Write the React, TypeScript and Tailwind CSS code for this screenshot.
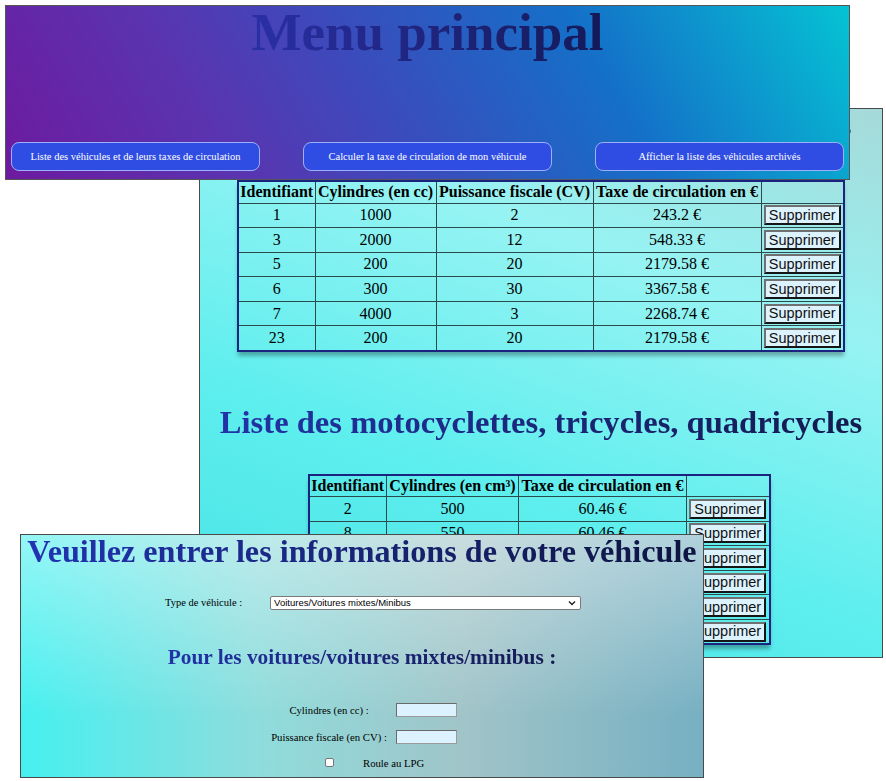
const voitures = [
  { id: 1, cc: 1000, cv: 2, taxe: "243.2 €" },
  { id: 3, cc: 2000, cv: 12, taxe: "548.33 €" },
  { id: 5, cc: 200, cv: 20, taxe: "2179.58 €" },
  { id: 6, cc: 300, cv: 30, taxe: "3367.58 €" },
  { id: 7, cc: 4000, cv: 3, taxe: "2268.74 €" },
  { id: 23, cc: 200, cv: 20, taxe: "2179.58 €" },
];

const motos = [
  { id: 2, cc: 500, taxe: "60.46 €" },
  { id: 8, cc: 550, taxe: "60.46 €" },
  { id: 10, cc: 125, taxe: "60.46 €" },
  { id: 12, cc: 250, taxe: "60.46 €" },
  { id: 15, cc: 600, taxe: "60.46 €" },
  { id: 19, cc: 900, taxe: "60.46 €" },
];

function Supprimer() {
  return (
    <button className="mx-auto block h-[20px] w-[77px] border-2 border-t-[#707070] border-l-[#707070] border-b-[#151515] border-r-[#151515] bg-[#dcf2fd] font-['Liberation_Sans',sans-serif] text-[14.5px] leading-none text-[#111]">
      Supprimer
    </button>
  );
}

const th = "border border-[#2b4a4c] px-0 font-bold whitespace-nowrap";
const td = "border border-[#2b4a4c] text-center";

export default function App() {
  return (
    <div className="relative h-[781px] w-[886px] overflow-hidden bg-white font-['Liberation_Serif',serif] text-black">
      {/* fenêtre des listes */}
      <div className="absolute left-[199px] top-[108px] z-0 h-[550px] w-[684px] border border-[#4a4a4a] bg-[linear-gradient(200deg,#a6d9d9_0%,#97f3f3_30%,#5eeeee_65%,#46e2e4_100%)]">
        <h1 className="-mt-[2px] text-center text-[32.5px] font-bold leading-[37px] whitespace-nowrap">
          <span className="inline-block bg-linear-to-r from-[#2233a6] to-[#141a50] bg-clip-text text-transparent">
            Liste des voitures, voitures mixtes et minibus
          </span>
        </h1>
        <table className="mx-auto mt-[36px] w-[606px] table-fixed border-collapse border-2 border-[#1b2380] text-[16px] leading-[18px] shadow-[0_5px_4px_-1px_rgba(0,0,0,0.3)]">
          <colgroup>
            <col className="w-[77px]" />
            <col className="w-[121px]" />
            <col className="w-[157px]" />
            <col className="w-[168px]" />
            <col className="w-[83px]" />
          </colgroup>
          <thead>
            <tr className="h-[22px]">
              <th className={th}>Identifiant</th>
              <th className={th}>Cylindres (en cc)</th>
              <th className={th}>Puissance fiscale (CV)</th>
              <th className={th}>Taxe de circulation en €</th>
              <th className={th}></th>
            </tr>
          </thead>
          <tbody>
            {voitures.map((v) => (
              <tr key={v.id} className="h-[24.6px]">
                <td className={td}>{v.id}</td>
                <td className={td}>{v.cc}</td>
                <td className={td}>{v.cv}</td>
                <td className={td}>{v.taxe}</td>
                <td className={td}>
                  <Supprimer />
                </td>
              </tr>
            ))}
          </tbody>
        </table>

        <h1 className="mt-[52px] text-center text-[32.6px] font-bold leading-[37px] whitespace-nowrap">
          <span className="inline-block bg-linear-to-r from-[#2233a8] to-[#141a4e] bg-clip-text text-transparent">
            Liste des motocyclettes, tricycles, quadricycles
          </span>
        </h1>
        <table className="mx-auto mt-[33px] w-[461px] -translate-x-[2px] table-fixed border-collapse border-2 border-[#1b2380] text-[16px] leading-[18px] shadow-[0_5px_4px_-1px_rgba(0,0,0,0.3)]">
          <colgroup>
            <col className="w-[78px]" />
            <col className="w-[132px]" />
            <col className="w-[168px]" />
            <col className="w-[83px]" />
          </colgroup>
          <thead>
            <tr className="h-[22px]">
              <th className={th}>Identifiant</th>
              <th className={th}>Cylindres (en cm³)</th>
              <th className={th}>Taxe de circulation en €</th>
              <th className={th}></th>
            </tr>
          </thead>
          <tbody>
            {motos.map((m) => (
              <tr key={m.id} className="h-[24.6px]">
                <td className={td}>{m.id}</td>
                <td className={td}>{m.cc}</td>
                <td className={td}>{m.taxe}</td>
                <td className={td}>
                  <Supprimer />
                </td>
              </tr>
            ))}
          </tbody>
        </table>
      </div>

      {/* menu principal */}
      <div className="absolute left-[5px] top-[5px] z-10 flex h-[175px] w-[845px] flex-col border border-[#555] bg-[linear-gradient(60deg,#6d1a9f_0%,#5a34b0_25%,#3a4cbc_45%,#1470c8_70%,#05c3d3_100%)]">
        <h1 className="-mt-[3px] text-center text-[53px] font-bold leading-[59px]">
          <span className="inline-block bg-linear-to-r from-[#2a2fa5] to-[#141a58] bg-clip-text text-transparent">
            Menu principal
          </span>
        </h1>
        <div className="mt-auto flex justify-between px-[5px] pb-[8px]">
          {[
            "Liste des véhicules et de leurs taxes de circulation",
            "Calculer la taxe de circulation de mon véhicule",
            "Afficher la liste des véhicules archivés",
          ].map((label) => (
            <button
              key={label}
              className="h-[29px] w-[249px] rounded-[8px] border border-[#9db0fa] bg-[#2f4de2] text-[10.5px] text-white"
            >
              {label}
            </button>
          ))}
        </div>
      </div>

      {/* formulaire */}
      <div className="absolute left-[20px] top-[534px] z-10 flex h-[244px] w-[684px] flex-col border border-[#4a4a4a] bg-[linear-gradient(to_bottom,rgba(255,255,255,0.42),rgba(255,255,255,0)_75%),linear-gradient(to_right,#46f0f0_0%,#8fdcdc_35%,#a0c4c8_65%,#76b0c2_100%)]">
        <h1 className="-mt-[2px] text-center text-[32.2px] font-bold leading-[37px] whitespace-nowrap">
          <span className="inline-block bg-linear-to-r from-[#2233b2] to-[#0e1440] bg-clip-text text-transparent">
            Veuillez entrer les informations de votre véhicule
          </span>
        </h1>

        <div className="ml-[144px] mt-[25px] flex items-center gap-[28px] text-[10.5px]">
          <span>Type de véhicule :</span>
          <div className="flex h-[14px] w-[311px] items-center justify-between rounded-[2px] border border-[#7a7a7a] bg-white pl-[3px] pr-[4px] font-['Liberation_Sans',sans-serif] text-[9.5px] text-black">
            <span>Voitures/Voitures mixtes/Minibus</span>
            <svg width="8" height="6" viewBox="0 0 8 6" fill="none" stroke="#222" strokeWidth="1.4">
              <path d="M1 1.5 L4 4.5 L7 1.5" />
            </svg>
          </div>
        </div>

        <h2 className="mt-[34px] text-center text-[21.4px] font-bold leading-[25px]">
          <span className="inline-block bg-linear-to-r from-[#2233a8] to-[#151a52] bg-clip-text text-transparent">
            Pour les voitures/voitures mixtes/minibus :
          </span>
        </h2>

        <div className="ml-[245px] mt-[33px] grid grid-cols-[126px_61px] items-center gap-x-[4px] gap-y-[13px] text-[10.7px] leading-[14px]">
          <span className="text-center">Cylindres (en cc) :</span>
          <div className="h-[14px] border border-t-[#6a6a6a] border-l-[#6a6a6a] border-b-[#9a9a9a] border-r-[#9a9a9a] bg-[#dcf2ff]" />
          <span className="text-center">Puissance fiscale (en CV) :</span>
          <div className="h-[14px] border border-t-[#6a6a6a] border-l-[#6a6a6a] border-b-[#9a9a9a] border-r-[#9a9a9a] bg-[#dcf2ff]" />
        </div>

        <div className="ml-[304px] mt-[12px] flex items-center text-[10.7px] leading-[14px]">
          <div className="h-[9px] w-[9px] rounded-[2px] border border-[#767676] bg-white" />
          <span className="ml-[29px]">Roule au LPG</span>
        </div>
      </div>
    </div>
  );
}
